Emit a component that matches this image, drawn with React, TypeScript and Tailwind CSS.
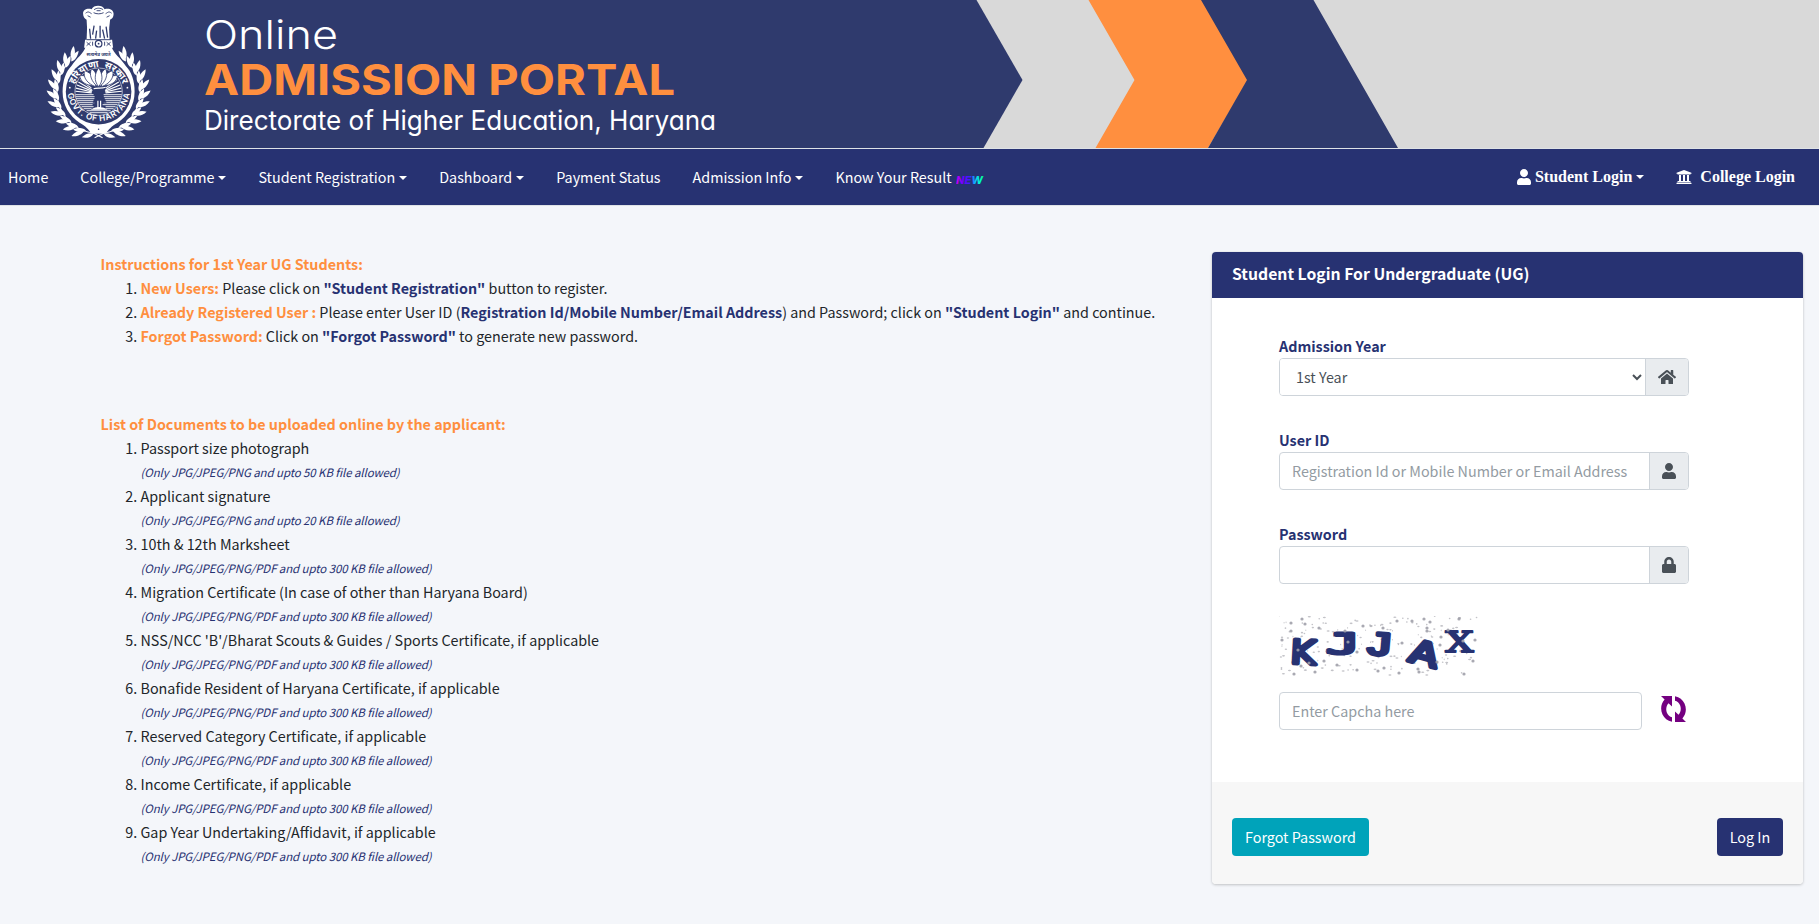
import React from "react";
import { FaHome, FaLock, FaUniversity, FaUser } from "react-icons/fa";

const LEAF = "M0 0C3 -2.500 3.200 -8.500 0.600 -13.500C-2.400 -9 -2.800 -3.500 0 0Z";

const leafAngles = [42, 54, 66, 78, 90, 102, 114, 126, 138, 150, 162];

function Wreath() {
  return (
    <g fill="#fff">
      {leafAngles.map((a) => (
        <g key={a} transform={`rotate(${-a})`}>
          <path d={LEAF} transform="translate(0 -40.800) rotate(74) scale(.95)" />
          <path d={LEAF} transform="translate(2 -42) rotate(47) scale(.98)" />
        </g>
      ))}
      <path d={LEAF} transform="rotate(-173) translate(0 -42.500) rotate(64) scale(.9)" />
      <path d="M-32 -27A42 42 0 0 0 -5 41.500L4 46" fill="none" stroke="#fff" strokeWidth="1.100" />
    </g>
  );
}

function Emblem() {
  return (
    <g transform="translate(98.600 91.700)">
      <Wreath />
      <g transform="scale(-1 1)">
        <Wreath />
      </g>
      {/* shield outline with shoulders and base */}
      <path
        d="M-13 -45H13C15 -38 22 -34 27 -26C33 -20 36 -11 36 0C36 14 29 24 19 31C13 34 10 38 7 42H-7C-10 38 -13 34 -19 31C-29 24 -36 14 -36 0C-36 -11 -33 -20 -27 -26C-22 -34 -15 -38 -13 -45Z"
        fill="#fff"
      />
      <circle r="32.800" fill="#2f3a6d" />
      <circle cy="37.500" r=".8" fill="#2f3a6d" />
      <text
        y="-35.500"
        textAnchor="middle"
        fontSize="5"
        fontWeight="700"
        fill="#2f3a6d"
        fontFamily="Noto Sans Devanagari, Noto Sans, sans-serif"
        textLength="24"
        lengthAdjust="spacingAndGlyphs"
      >
        सत्यमेव जयते
      </text>
      {/* lion capital and abacus */}
      <g fill="#fff">
        <path d="M-15.500 -78C-16 -82 -11 -84 -7 -82.500C-5 -87 4 -87 6 -82.500C10 -84 15 -82 15 -78C15 -74 13 -73 11.500 -72L10.500 -63H-11.500L-12 -72C-14 -73 -15.500 -75 -15.500 -78Z" />
        <path d="M-11.500 -64H10.500L11 -52H-12Z" />
        <path d="M-13.500 -52H13.500L14.500 -44H-14.500Z" />
      </g>
      <g fill="none" stroke="#2f3a6d" strokeWidth=".9">
        <path d="M-13 -78.500C-10 -81 -9 -79 -7 -78M13 -78.500C10 -81 9 -79 7 -78M-4.500 -82C-2 -84 2 -84 4.500 -82M-5 -79C-2 -77.500 2 -77.500 5 -79M-11 -76L-8 -74.500M11 -76L8 -74.500M-2 -81H2" />
        <path
          strokeWidth="1.300"
          d="M-9 -63L-8 -53M-4.500 -66L-6 -57M-2 -61L-3 -53M1.500 -66V-54M4 -62L6 -53M7.500 -65L9 -54"
        />
        <path d="M-12 -52H12" />
        <path d="M-12 -49.500L-8 -46M-8 -49.500L-12 -46M-6 -50V-46M12 -49.500L8 -46M8 -49.500L12 -46M6 -50V-46" />
        <circle cy="-48" r="3.300" strokeWidth="1.200" />
      </g>
      <circle cy="-48" r=".9" fill="#2f3a6d" />
      {/* rays and water */}
      <g fill="none" stroke="#fff">
        <circle r="23.700" strokeWidth=".6" />
        <g strokeWidth="1.200">
          {[-84, -76, -68, -60, -52, 52, 60, 68, 76, 84].map((a) => (
            <path key={a} d="M0 -7V-23.300" transform={`translate(0 2) rotate(${a})`} />
          ))}
        </g>
        <path
          strokeWidth=".9"
          d="M-23 3H-5M5 3H23M-23 5H-4M4 5H23M-22.500 7H-4M4 7H22.500M-21.500 9H-5M4 9H21.500M-20.500 11H-4M5 11H20.500M-19 13H-6M4 13H19M-17 15H-5M7 15H17M-15 17H-7M7 17H15M-12 19H12M-9 21H9"
        />
      </g>
      {/* lotus */}
      <g fill="#fff" stroke="#2f3a6d" strokeWidth=".8">
        <path d="M-4 -6C-13 -6 -18 -10 -19 -16C-12 -17 -6 -13 -4 -6ZM4 -6C13 -6 18 -10 19 -16C12 -17 6 -13 4 -6Z" />
        <path d="M-3 -5C-11 -8 -16 -14 -14 -21C-7 -19 -2 -12 -3 -5ZM3 -5C11 -8 16 -14 14 -21C7 -19 2 -12 3 -5Z" />
        <path d="M-1 -5C-7 -10 -10 -17 -7 -23C-2 -20 0 -12 -1 -5ZM1 -5C7 -10 10 -17 7 -23C2 -20 0 -12 1 -5Z" />
        <path d="M0 -5C-5 -11 -4 -18 0 -24C4 -18 5 -11 0 -5Z" />
      </g>
      <path d="M-8 -4H8L4 2L8 11H-6L-2 3Z" fill="#2f3a6d" />
      <path d="M-5 -3C-2 -4 3 -3 7 -4.500M-.7 9V16M2 9V16M-6 17.500C-3 15.500 4 15.500 7 17.500Z" fill="#fff" stroke="#fff" strokeWidth="1.200" />
      <path id="emblem-top" d="M-25.500 1A25.500 25.500 0 0 1 25.500 1" fill="none" />
      <path id="emblem-bottom" d="M-31.300 -2A31.300 31.300 0 1 0 31.300 -2" fill="none" />
      <g fill="#fff">
        <text fontSize="9.500" fontWeight="700" textAnchor="middle" fontFamily="Noto Sans Devanagari, Noto Sans, sans-serif">
          <textPath href="#emblem-top" startOffset="50%">
            हरियाणा&#160;&#160;सरकार
          </textPath>
        </text>
        <text fontSize="8.200" fontWeight="600" textAnchor="middle" fontFamily="Inter, sans-serif">
          <textPath href="#emblem-bottom" startOffset="50%" textLength="90">
            GOVT. OF HARYANA
          </textPath>
        </text>
        <circle cx="-28.800" cy="-4" r=".9" />
        <circle cx="28.800" cy="-4" r=".9" />
      </g>
    </g>
  );
}

function Banner() {
  return (
    <svg viewBox="0 0 1819 148" className="block h-[148px] w-[1819px] [font-feature-settings:'cv11']" aria-label="Online Admission Portal">
      <rect width="1819" height="148" fill="#d9d9d9" />
      <path d="M0 0H976.500L1022.500 80L983.500 148H0Z" fill="#2f3a6d" />
      <path d="M1088.500 0H1202L1248 80L1208 148H1095.500L1134.500 80Z" fill="#ff8f3f" />
      <path d="M1201 0H1313.500L1398 148H1208L1247 80Z" fill="#2f3a6d" />
      <Emblem />
      <g fontFamily="Inter, sans-serif">
        <text x="204" y="49" fontSize="39.500" fontWeight="300" fill="#fff" textLength="134" lengthAdjust="spacingAndGlyphs">
          Online
        </text>
        <text x="204" y="95" fontSize="42.500" fontWeight="700" fill="#ff8f3f" textLength="471" lengthAdjust="spacingAndGlyphs">
          ADMISSION PORTAL
        </text>
        <text x="204" y="129.500" fontSize="27" fontWeight="400" fill="#fff" textLength="512" lengthAdjust="spacingAndGlyphs">
          Directorate of Higher Education, Haryana
        </text>
      </g>
    </svg>
  );
}

function Caret() {
  return <span className="ml-1 inline-block border-x-[4.800px] border-t-[4.800px] border-x-transparent border-t-white align-[3.500px]" />;
}

function NewBadge() {
  return (
    <svg viewBox="0 0 28 16" className="ml-1 inline-block h-4 w-7 align-[-5px]">
      <defs>
        <linearGradient id="rainbow">
          <stop offset="0" stopColor="#d400f0" />
          <stop offset=".25" stopColor="#6a00ff" />
          <stop offset=".5" stopColor="#3a20ff" />
          <stop offset=".68" stopColor="#10b4ff" />
          <stop offset=".85" stopColor="#00ffc8" />
          <stop offset="1" stopColor="#10f070" />
        </linearGradient>
      </defs>
      <text x="0" y="12" fontFamily="Inter, sans-serif" fontSize="10.500" fontWeight="800" fontStyle="italic" fill="url(#rainbow)" textLength="27" lengthAdjust="spacingAndGlyphs">
        NEW
      </text>
    </svg>
  );
}

const navItems = [
  { label: "Home" },
  { label: "College/Programme", menu: true },
  { label: "Student Registration", menu: true },
  { label: "Dashboard", menu: true },
  { label: "Payment Status" },
  { label: "Admission Info", menu: true },
  { label: "Know Your Result", fresh: true },
];

function NavBar() {
  return (
    <nav className="flex h-[58px] items-center justify-between whitespace-nowrap border-y border-[#dee2e6] bg-[#273272] pl-2 pr-6 text-white">
      <ul className="flex gap-8">
        {navItems.map((item) => (
          <li key={item.label} className="h-6">
            <a href="#">
              {item.label}
              {item.menu && <Caret />}
              {item.fresh && <NewBadge />}
            </a>
          </li>
        ))}
      </ul>
      <ul className="flex gap-8 font-['Liberation_Serif',serif] text-base font-bold">
        <li>
          <a href="#" className="flex items-center">
            <FaUser className="mr-1 h-4 w-3.5" />
            <span>
              Student Login
              <Caret />
            </span>
          </a>
        </li>
        <li>
          <a href="#" className="flex items-center">
            <FaUniversity className="mr-2 size-4" />
            College Login
          </a>
        </li>
      </ul>
    </nav>
  );
}

const Key = ({ children }: { children: React.ReactNode }) => <b className="text-[#ff8f3f]">{children}</b>;
const Navy = ({ children }: { children: React.ReactNode }) => <b className="text-[#273272]">{children}</b>;

const JPG50 = "(Only JPG/JPEG/PNG and upto 50 KB file allowed)";
const JPG20 = "(Only JPG/JPEG/PNG and upto 20 KB file allowed)";
const PDF = "(Only JPG/JPEG/PNG/PDF and upto 300 KB file allowed)";

const documents: [string, string][] = [
  ["Passport size photograph", JPG50],
  ["Applicant signature", JPG20],
  ["10th & 12th Marksheet", PDF],
  ["Migration Certificate (In case of other than Haryana Board)", PDF],
  ["NSS/NCC 'B'/Bharat Scouts & Guides / Sports Certificate, if applicable", PDF],
  ["Bonafide Resident of Haryana Certificate, if applicable", PDF],
  ["Reserved Category Certificate, if applicable", PDF],
  ["Income Certificate, if applicable", PDF],
  ["Gap Year Undertaking/Affidavit, if applicable", PDF],
];

function Instructions() {
  return (
    <section className="whitespace-nowrap pl-[100.500px] text-[#212529]">
      <h2 className="font-bold text-[#ff8f3f]">Instructions for 1st Year UG Students:</h2>
      <ol className="list-decimal pl-10">
        <li>
          <Key>New Users:</Key> Please click on <Navy>"Student Registration"</Navy> button to register.
        </li>
        <li>
          <Key>Already Registered User :</Key> Please enter User ID (<Navy>Registration Id/Mobile Number/Email Address</Navy>) and
          Password; click on <Navy>"Student Login"</Navy> and continue.
        </li>
        <li>
          <Key>Forgot Password:</Key> Click on <Navy>"Forgot Password"</Navy> to generate new password.
        </li>
      </ol>
      <h2 className="mt-16 font-bold text-[#ff8f3f]">List of Documents to be uploaded online by the applicant:</h2>
      <ol className="list-decimal pl-10">
        {documents.map(([name, note]) => (
          <li key={name}>
            {name}
            <em className="block text-[11.460px] tracking-[-0.085px] text-[#273272]">{note}</em>
          </li>
        ))}
      </ol>
    </section>
  );
}

function Field({ label, addon, wide, children }: { label: string; addon: React.ReactNode; wide?: boolean; children: React.ReactNode }) {
  return (
    <div className="mb-8">
      <label className="block font-bold text-[#273272]">{label}</label>
      <div className="flex h-[38px] overflow-hidden rounded border border-[#ced4da] bg-white">
        {children}
        <span
          className={
            wide
              ? "flex w-[43px] items-center justify-center border-l border-[#ced4da] bg-[#e9ecef] text-[#495057]"
              : "flex w-[39px] items-center justify-center border-l border-[#ced4da] bg-[#e9ecef] text-[#495057]"
          }
        >
          {addon}
        </span>
      </div>
    </div>
  );
}

const captchaGlyphs = [
  { c: "K", x: 11.5, y: 48, w: 25, size: 33, rot: 3, stroke: 3.8, font: "DejaVu Sans" },
  { c: "J", x: 47, y: 37.5, w: 34, size: 29, rot: 0, stroke: 3, font: "DejaVu Sans Mono" },
  { c: "J", x: 89, y: 39, w: 23, size: 32, rot: 5, stroke: 3.4, font: "Liberation Sans" },
  { c: "A", x: 131, y: 49, w: 29, size: 32, rot: 15, stroke: 4, font: "DejaVu Sans" },
  { c: "X", x: 166.5, y: 36, w: 28, size: 27.5, rot: 0, stroke: 1.8, font: "DejaVu Serif" },
];

const bigSpecks = [
  [12, 7], [12, 15], [23, 3], [26, 8], [40, 12], [30, 47], [36, 56], [15, 58], [19, 34], [69, 26], [66, 15], [78, 36], [78, 54], [99, 55],
  [123, 27], [133, 5], [139, 53], [140, 56], [145, 3], [151, 6], [148, 15], [148, 12], [162, 21], [158, 46], [161, 29], [180, 3], [169, 14],
  [184, 25], [196, 24], [194, 45], [185, 58], [120, 57], [105, 52], [45, 45], [58, 49], [22, 50], [3, 24], [118, 5], [84, 10], [104, 12],
];

const smallSpecks = Array.from({ length: 170 }, (_, i) => ({
  x: (i * 73.13 + ((i * i * 7) % 31)) % 198,
  y: (i * 29.71 + ((i * i * 3) % 17)) % 59,
  w: 0.5 + ((i * 5) % 4) * 0.35,
}));

function Captcha() {
  return (
    <svg viewBox="0 0 200 60" className="block h-[60px] w-[200px]" aria-label="Captcha">
      <g fill="#a3a3ab">
        {smallSpecks.map((s, i) => (
          <ellipse key={i} cx={s.x} cy={s.y} rx={s.w} ry={0.8} opacity={0.65} />
        ))}
      </g>
      <g fill="#273272" stroke="#273272" strokeLinejoin="round">
        {captchaGlyphs.map((g, i) => (
          <text
            key={i}
            x={g.x}
            y={g.y}
            fontFamily={g.font}
            fontSize={g.size}
            strokeWidth={g.stroke}
            textLength={g.w}
            lengthAdjust="spacingAndGlyphs"
            transform={`rotate(${g.rot} ${g.x + g.w / 2} ${g.y - 12})`}
          >
            {g.c}
          </text>
        ))}
      </g>
      <g fill="#a0a0aa">
        {bigSpecks.map(([x, y], i) => (
          <circle key={i} cx={x} cy={y} r={1.6} opacity={0.9} />
        ))}
      </g>
    </svg>
  );
}

function RefreshIcon() {
  return (
    <svg viewBox="0 0 25 26" className="h-[26px] w-[25px]" fill="#740080">
      <path
        id="refresh-half"
        d="M0 0H11V10.500L7.500 7.300C4.500 10.500 4.300 16.500 8 19.800Q9.300 21 11 21.300V25.800C6.500 25 3.300 22.200 1.500 18.500C-.8 13.500 -.2 7.800 3.600 3.600Z"
      />
      <use href="#refresh-half" transform="rotate(180 12.500 13)" />
    </svg>
  );
}

function LoginCard() {
  return (
    <section className="w-[591px] overflow-hidden rounded bg-white shadow-[0_0_1px_rgba(0,0,0,.125),0_1px_3px_rgba(0,0,0,.2)]">
      <h3 className="flex h-[46px] items-center bg-[#273272] px-5 pb-[3px] text-[15.750px] font-bold text-white">
        Student Login For Undergraduate (UG)
      </h3>
      <div className="h-[484px] px-[67px] pt-9">
        <div className="w-[410px]">
          <Field label="Admission Year" wide addon={<FaHome className="size-[18px]" />}>
            <select className="min-w-0 flex-1 bg-white px-3 pb-0.5 text-[#495057] outline-none">
              <option>1st Year</option>
            </select>
          </Field>
          <Field label="User ID" addon={<FaUser className="size-4" />}>
            <input
              className="min-w-0 flex-1 px-3 pb-px outline-none placeholder:text-[#939ba2]"
              placeholder="Registration Id or Mobile Number or Email Address"
            />
          </Field>
          <Field label="Password" addon={<FaLock className="size-4" />}>
            <input type="password" className="min-w-0 flex-1 px-3 outline-none" />
          </Field>
          <Captcha />
          <div className="mt-4 flex gap-[19px]">
            <input
              className="h-[38px] w-[363px] rounded border border-[#ced4da] px-3 pb-0.5 outline-none placeholder:text-[#939ba2]"
              placeholder="Enter Capcha here"
            />
            <button className="flex h-[34px] items-center">
              <RefreshIcon />
            </button>
          </div>
        </div>
      </div>
      <div className="flex h-[102px] justify-between bg-[#f7f7f7] px-5 pt-9">
        <button className="h-[38px] w-[137px] rounded bg-[#00a3ba] pb-px text-white">Forgot Password</button>
        <button className="h-[38px] w-[66px] rounded bg-[#273272] pb-px text-white">Log In</button>
      </div>
    </section>
  );
}

export default function App() {
  return (
    <div className="h-[924px] w-[1819px] overflow-hidden bg-[#f4f6fa] font-['Noto_Sans_CJK_SC','Noto_Sans',sans-serif] text-[14.330px] leading-6">
      <header>
        <Banner />
        <NavBar />
      </header>
      <main className="flex items-start justify-between pr-4 pt-[46px]">
        <Instructions />
        <LoginCard />
      </main>
    </div>
  );
}
